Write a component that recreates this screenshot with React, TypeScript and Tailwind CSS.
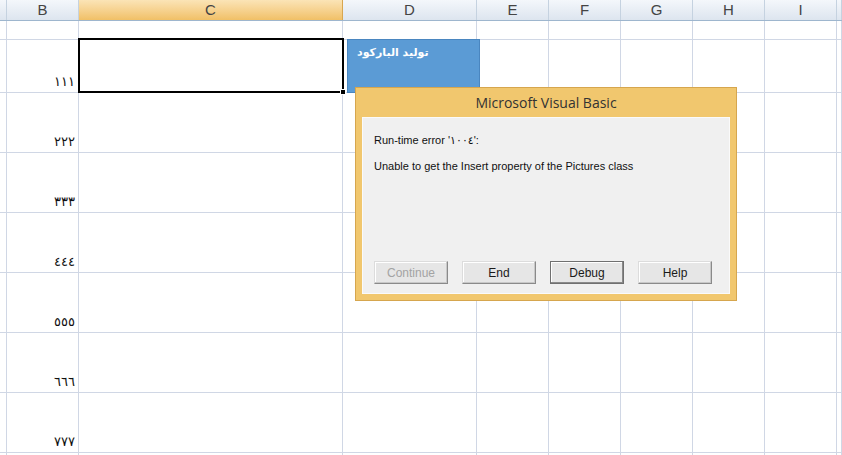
import React from "react";

const cols = [
  { k: "A", w: "w-[7px]", label: "" },
  { k: "B", w: "w-[72px]", label: "B" },
  { k: "C", w: "w-[264px]", label: "C" },
  { k: "D", w: "w-[134px]", label: "D" },
  { k: "E", w: "w-[72px]", label: "E" },
  { k: "F", w: "w-[72px]", label: "F" },
  { k: "G", w: "w-[72px]", label: "G" },
  { k: "H", w: "w-[72px]", label: "H" },
  { k: "I", w: "w-[72px]", label: "I" },
  { k: "J", w: "flex-1", label: "" },
];

const rows = [
  { h: "h-[19px]", v: "" },
  { h: "h-[53px]", v: "١١١" },
  { h: "h-[60px]", v: "٢٢٢" },
  { h: "h-[60px]", v: "٣٣٣" },
  { h: "h-[60px]", v: "٤٤٤" },
  { h: "h-[60px]", v: "٥٥٥" },
  { h: "h-[60px]", v: "٦٦٦" },
  { h: "h-[60px]", v: "٧٧٧" },
  { h: "h-[10px]", v: "" },
];

function Btn({ label, disabled, def }: { label: string; disabled?: boolean; def?: boolean }) {
  return (
    <div
      className={
        "w-[74px] h-[23px] shrink-0 flex items-center justify-center bg-[#e6e6e6] border " +
        (def
          ? "border-[#707070] shadow-[inset_-1px_-1px_0_#8a8a8a,inset_1px_1px_0_#ffffff]"
          : "border-t-[#dcdcdc] border-l-[#dcdcdc] border-r-[#8a8a8a] border-b-[#8a8a8a] shadow-[inset_-1px_-1px_0_#c8c8c8,inset_1px_1px_0_#ffffff]") +
        (disabled ? " text-[#a3a3a3]" : " text-[#1a1a1a]")
      }
    >
      <span className="text-[12px] leading-none">{label}</span>
    </div>
  );
}

export default function App() {
  return (
    <div className="relative w-[842px] h-[455px] overflow-hidden bg-white font-['Liberation_Sans','DejaVu_Sans',sans-serif]">
      {/* header row */}
      <div className="flex h-[21px] border-b border-[#9eb6ce]">
        {cols.map((c) => (
          <div
            key={c.k}
            className={
              c.w +
              " shrink-0 h-full flex items-center justify-center border-r text-[15px] " +
              (c.k === "C"
                ? "bg-gradient-to-b from-[#fbe4b6] to-[#f1c066] border-[#d8a650] text-[#444]"
                : "bg-gradient-to-b from-[#f4f7fb] to-[#dde5ef] border-[#c5d2e0] text-[#444]")
            }
          >
            {c.label}
          </div>
        ))}
      </div>
      {/* grid rows */}
      {rows.map((r, i) => (
        <div key={i} className={"flex " + r.h + " border-b border-[#d0d7e5]"}>
          {cols.map((c) => (
            <div
              key={c.k}
              className={c.w + " shrink-0 h-full border-r border-[#d0d7e5] flex items-end justify-end pr-[3px] pb-[4px]"}
            >
              {c.k === "B" && r.v ? (
                <span className="text-[13px] leading-none text-[#111] font-['DejaVu_Sans',sans-serif]">{r.v}</span>
              ) : null}
            </div>
          ))}
        </div>
      ))}

      {/* selected cell */}
      <div className="absolute left-[78px] top-[38px] w-[266px] h-[55px] border-2 border-black" />
      <div className="absolute left-[340px] top-[89px] w-[6px] h-[6px] bg-black border border-white" />

      {/* blue shape */}
      <div className="absolute left-[347px] top-[39px] w-[133px] h-[54px] bg-[#5b9bd5] border border-[#4a86c0] px-[9px] pt-[5px]">
        <div className="text-white font-bold text-[11px] font-['DejaVu_Sans',sans-serif]">توليد الباركود</div>
      </div>

      {/* dialog */}
      <div className="absolute left-[355px] top-[87px] w-[382px] h-[214px] bg-[#f1c76e] border border-[#d6a64e] flex flex-col px-[6px] pb-[6px]">
        <div className="h-[29px] flex items-center justify-center text-[14px] text-[#333] font-['Open_Sans',sans-serif]">
          Microsoft Visual Basic
        </div>
        <div className="flex-1 bg-[#f0f0f0] border border-[#fafafa] flex flex-col px-[11px] text-[11px] text-[#111]">
          <div className="mt-[14px]">Run-time error '١٠٠٤':</div>
          <div className="mt-[9px]">Unable to get the Insert property of the Pictures class</div>
          <div className="mt-auto mb-[9px] flex gap-[14px]">
            <Btn label="Continue" disabled />
            <Btn label="End" />
            <Btn label="Debug" def />
            <Btn label="Help" />
          </div>
        </div>
      </div>
    </div>
  );
}
